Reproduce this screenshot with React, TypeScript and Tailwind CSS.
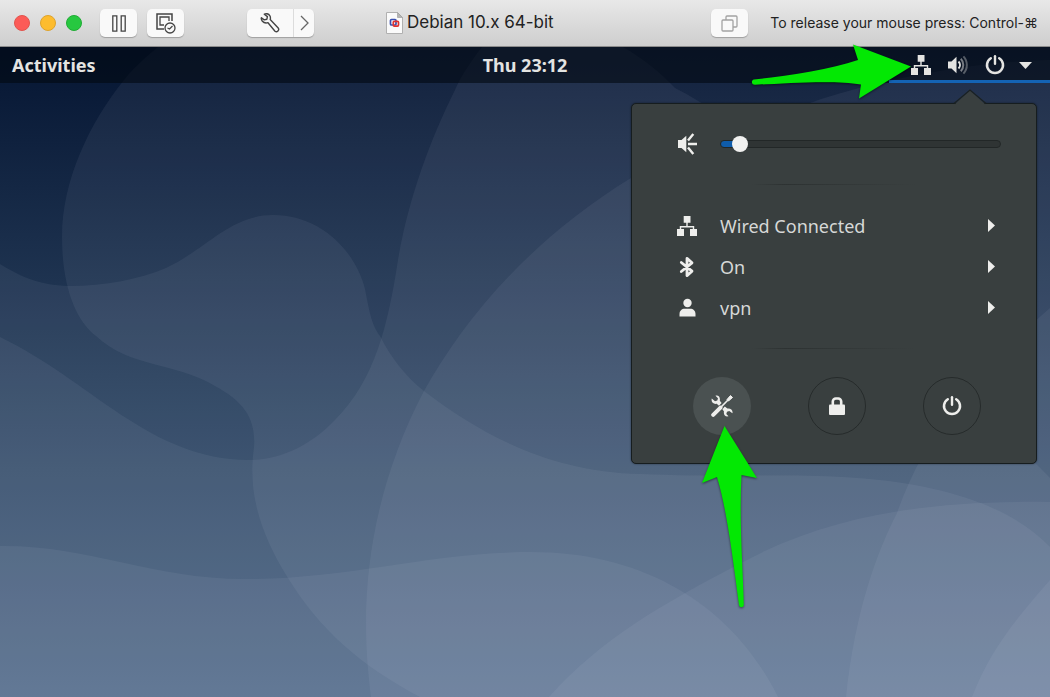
import { useState } from 'react'
import type { CSSProperties, ReactNode } from 'react'

interface MenuEntry {
  id: string
  label: string
  icon: ReactNode
}

function NetworkIcon() {
  return (
    <svg width="20" height="20" viewBox="0 0 20 20" fill="none" aria-hidden="true">
      <path d="M10 6v5M3.5 14v-3.2h13V14" stroke="currentColor" strokeWidth="1.4" />
      <path d="M6.7 0h6.8v6.8H6.7zM0 13h7v7H0zM13 13h7v7h-7z" fill="currentColor" />
    </svg>
  )
}

function VolumeIcon() {
  return (
    <svg width="22" height="20" viewBox="0 0 22 20" fill="none" aria-hidden="true">
      <path d="M1 6.5h3.5L9.5 1.8v16.4L4.5 13.5H1z" fill="currentColor" />
      <path d="M11.5 6.5a5 5 0 0 1 0 7" stroke="currentColor" strokeWidth="2" />
      <path d="M13.8 3.8a9 9 0 0 1 0 12.4" stroke="currentColor" strokeWidth="2" opacity=".5" />
      <path d="M16.4 1.4a12.5 12.5 0 0 1 0 17.2" stroke="currentColor" strokeWidth="2" opacity=".35" />
    </svg>
  )
}

function SpeakerIcon() {
  return (
    <svg width="20" height="22" viewBox="0 0 20 22" fill="none" aria-hidden="true">
      <path d="M1 7h3.5L9.3 2.8v16.4L4.5 15H1z" fill="currentColor" />
      <path d="M11 7.5 16.3 1M11 11h9M11 14.5l5.3 6.5" stroke="currentColor" strokeWidth="2.4" />
    </svg>
  )
}

function PowerIcon() {
  return (
    <svg width="20" height="20" viewBox="0 0 20 20" fill="none" aria-hidden="true">
      <path d="M5.8 3.2a8 8 0 1 0 8.4 0" stroke="currentColor" strokeWidth="2.5" strokeLinecap="round" />
      <path d="M10 1.2v7.6" stroke="currentColor" strokeWidth="2.4" strokeLinecap="round" />
    </svg>
  )
}

function BluetoothIcon() {
  return (
    <svg width="16" height="22" viewBox="0 0 16 22" fill="none" aria-hidden="true">
      <path d="M2.3 6.5 13 15.2 8 19.6V2.4l5 4.4L2.3 15.5" stroke="currentColor" strokeWidth="2.8" strokeLinejoin="round" strokeLinecap="round" />
    </svg>
  )
}

function UserIcon() {
  return (
    <svg width="18" height="20" viewBox="0 0 18 20" fill="currentColor" aria-hidden="true">
      <circle cx="9.5" cy="5" r="4.2" />
      <path d="M1.500 18.500V16c0-3.300 2.300-5.300 5.200-5.300h5.600c2.900 0 5.200 2 5.200 5.300v2.500z" />
    </svg>
  )
}

function ToolsIcon() {
  return (
    <svg width="22" height="22" viewBox="0 0 22 22" fill="none" aria-hidden="true">
      <path d="M2.2 19.8 9.5 12.6" stroke="currentColor" strokeWidth="4" strokeLinecap="round" />
      <path d="M9.5 12.6 18 4" stroke="currentColor" strokeWidth="1.500" />
      <path d="m16 4.500 3.500-4 2 2-4 3.500z" fill="currentColor" stroke="currentColor" strokeWidth="1" strokeLinejoin="round" />
      <path d="M4.500.8 7 3.300 6.300 5.500 4 6.200.8 3.600C-.2 6.600 2 9.400 5.700 8.800l2.300 2 2.600-2.700-1.800-2.400C9.500 2.300 7.400-.1 4.500.8z" fill="currentColor" />
      <path d="m13.800 11.600-2.400 2.600 1.600 2.200c-.8 3.300 1.500 5.700 4.500 4.900L15.300 19l.7-2.300 2.300-.7 3.100 2.300c.8-3-1.600-5.300-5-4.800z" fill="currentColor" />
    </svg>
  )
}

function LockIcon() {
  return (
    <svg width="18" height="20" viewBox="0 0 18 20" fill="none" aria-hidden="true">
      <path d="M4.800 9V5.500a3 3 0 0 1 3-3h2.400a3 3 0 0 1 3 3V9" stroke="currentColor" strokeWidth="2.600" />
      <rect x="1" y="8.500" width="16" height="10.500" rx="1" fill="currentColor" />
    </svg>
  )
}

function PauseIcon() {
  return (
    <svg width="14" height="17" viewBox="0 0 14 17" fill="none" aria-hidden="true">
      <path d="M.8.800h4v15.400h-4zM9.200.800h4v15.400h-4z" stroke="#444" strokeWidth="1.300" />
    </svg>
  )
}

function SnapshotIcon() {
  return (
    <svg width="20" height="21" viewBox="0 0 20 21" fill="none" stroke="#444" aria-hidden="true">
      <path d="M8 16H1V1h15v7" strokeWidth="1.500" />
      <path d="M8 12H4V4h9v4" strokeWidth="1.300" />
      <circle cx="14" cy="15" r="5" fill="#f8f8f8" strokeWidth="1.300" />
      <path d="m11.500 15 2 1 3-3" strokeWidth="1.200" />
    </svg>
  )
}

function WrenchIcon() {
  return (
    <svg width="20" height="20" viewBox="0 0 20 20" fill="none" aria-hidden="true">
      <path
        d="M4.300 1.200C6.500.3 9 1 10 3c.6 1.300.5 2.500.2 3.600l8 8.400c1.600 2-1.200 4.800-3.200 3.200L8 9.700c-2 .6-4.200.2-5.600-1.400-1-1.200-1.300-2.600-1-3.600l2.800 2.200 2.700-.7.500-2.600z"
        stroke="#444"
        strokeWidth="1.400"
        strokeLinejoin="round"
      />
    </svg>
  )
}

function WindowsIcon() {
  return (
    <svg width="17" height="17" viewBox="0 0 17 17" fill="none" stroke="#a3a3a3" strokeWidth="1.300" aria-hidden="true">
      <rect x="1" y="5" width="11" height="11" rx="1" />
      <path d="M5 5V2a1 1 0 0 1 1-1h9a1 1 0 0 1 1 1v9a1 1 0 0 1-1 1h-3" />
    </svg>
  )
}

function DocumentIcon() {
  return (
    <svg width="17" height="22" viewBox="0 0 17 22" fill="none" aria-hidden="true">
      <path d="M.5.500h11l5 5v16H.5z" fill="#fafafa" stroke="#b0b0b0" />
      <path d="M11.500.500v5h5z" fill="#b4b4b4" stroke="#999" strokeWidth=".6" />
      <rect x="4.500" y="7.500" width="5.500" height="5.500" rx="1" stroke="#3a4fb0" strokeWidth="1.700" />
      <rect x="7.300" y="9.300" width="5.200" height="4.800" rx="1" stroke="#e0322f" strokeWidth="1.700" />
    </svg>
  )
}

// Soft translucent waves over a vertical gradient
function Wallpaper() {
  return (
    <svg
      className="absolute inset-0 h-full w-full"
      viewBox="0 47 1050 650"
      preserveAspectRatio="none"
      aria-hidden="true"
    >
      <defs>
        <linearGradient id="sky" x1="0" y1="0" x2="0" y2="1">
          <stop offset="0" stopColor="#051532" />
          <stop offset=".65" stopColor="#324b68" />
          <stop offset="1" stopColor="#496382" />
        </linearGradient>
      </defs>
      <rect x="0" y="47" width="1050" height="650" fill="url(#sky)" />
      <g fill="#f0f2ff" fillOpacity=".057">
        <path d="M158 47C140 62 132 70 124 80C90 122 62 180 62 237C62 285 75 320 96 336C130 368 175 362 215 386C245 402 256 420 254 447C248 490 258 530 288 578C320 630 360 665 420 697H1050V47Z" />
        <path d="M482 47C468 65 459 80 455 90C430 140 408 200 398 260C388 325 375 380 335 420C310 446 280 460 249 460C150 460 90 380 0 337V697H1050V478C900 330 800 150 675 88C660 72 645 60 623 47Z" />
        <path d="M0 264C22 277 38 285 69 286C105 286 140 279 166 268C205 250 230 215 273 215C320 215 355 250 365 289C370 315 372 325 380 336C390 356 405 376 424 391C480 434 550 472 640 474C740 478 790 473 857 478C940 484 1010 505 1050 547V697H0Z" />
        <path d="M1050 60C960 62 860 85 813 102C740 125 680 148 631 178C530 240 465 318 424 391C385 465 366 545 366 623C366 655 369 680 371 697H1050Z" />
        <path d="M0 546C90 545 150 579 245 579C350 579 430 552 531 552C650 552 735 610 778 697H0Z" />
        <path d="M549 697C600 640 660 605 743 562C830 515 930 500 1050 502V697Z" />
        <path d="M846 697C855 610 878 550 897 513C930 420 990 360 1050 308V697Z" />
        <path d="M972 697C990 650 1015 620 1050 580V697Z" />
      </g>
    </svg>
  )
}

function TitleBar() {
  return (
    <header className="flex h-[47px] shrink-0 items-center border-b border-[#8b8b8b] bg-linear-to-b from-[#e8e8e8] to-[#cecece] pr-3 pl-[14px] font-['Inter',sans-serif] text-[#222]">
      <div className="flex gap-[10px]">
        <button aria-label="Close" className="size-4 rounded-full border border-[#e2544d] bg-[#fc5b57]" />
        <button aria-label="Minimize" className="size-4 rounded-full border border-[#dea32c] bg-[#fdbc2e]" />
        <button aria-label="Zoom" className="size-4 rounded-full border border-[#20ac35] bg-[#27c840]" />
      </div>
      <div className="ml-[18px] flex gap-[10px]">
        <ToolButton label="Pause">
          <PauseIcon />
        </ToolButton>
        <ToolButton label="Snapshots">
          <SnapshotIcon />
        </ToolButton>
      </div>
      <div className="ml-[63px] flex h-7 divide-x divide-[#dcdcdc] rounded-[5px] bg-[#f9f9f9] shadow-[0_1px_1px_rgba(0,0,0,0.25)]">
        <button aria-label="Settings" className="flex w-[47px] items-center justify-center">
          <WrenchIcon />
        </button>
        <button aria-label="More" className="flex w-5 items-center justify-center">
          <svg width="9" height="16" viewBox="0 0 9 16" fill="none" aria-hidden="true">
            <path d="m1 1 7 7-7 7" stroke="#666" strokeWidth="1.300" />
          </svg>
        </button>
      </div>
      <h1 className="ml-[72px] flex items-center gap-1 text-[17px] whitespace-nowrap">
        <DocumentIcon />
        Debian 10.x 64-bit
      </h1>
      <div className="ml-auto flex items-center gap-[22px]">
        <ToolButton label="Show windows">
          <WindowsIcon />
        </ToolButton>
        <p className="text-sm whitespace-nowrap">To release your mouse press: Control-⌘</p>
      </div>
    </header>
  )
}

function ToolButton({ label, children }: { label: string; children: ReactNode }) {
  return (
    <button
      aria-label={label}
      className="flex h-7 w-[37px] items-center justify-center rounded-[5px] bg-[#f9f9f9] shadow-[0_1px_1px_rgba(0,0,0,0.25)]"
    >
      {children}
    </button>
  )
}

function TopBar() {
  return (
    <nav className="relative grid h-9 shrink-0 grid-cols-3 bg-[#020811]/60 text-lg font-bold text-[#e4e4e2]">
      <button className="justify-self-start px-3">Activities</button>
      <button className="justify-self-center">Thu 23:12</button>
      <button
        aria-label="System menu"
        className="flex items-center justify-self-end border-b-3 border-[#1463b4] pt-[3px] pr-[18px] pl-[22px]"
      >
        <NetworkIcon />
        <span className="ml-4">
          <VolumeIcon />
        </span>
        <span className="ml-4">
          <PowerIcon />
        </span>
        <svg className="ml-[14px]" width="13" height="7" viewBox="0 0 13 7" fill="currentColor" aria-hidden="true">
          <path d="M0 0h13L6.500 7z" />
        </svg>
      </button>
    </nav>
  )
}

function Separator() {
  return (
    <hr className="mx-auto my-5 h-px w-[164px] border-0 bg-linear-to-r from-transparent via-[#2d3232] via-20% to-transparent" />
  )
}

const entries: MenuEntry[] = [
  { id: 'wired', label: 'Wired Connected', icon: <NetworkIcon /> },
  { id: 'bluetooth', label: 'On', icon: <BluetoothIcon /> },
  { id: 'user', label: 'vpn', icon: <UserIcon /> },
]

function SystemMenu() {
  const [volume, setVolume] = useState(4)
  const fill = { '--fill': `${volume + 2}%` } as CSSProperties

  return (
    <section className="absolute top-5 right-[13px] w-[406px] rounded-[5px] border border-[#161d1f] bg-[#393f3f] pt-5 pb-7 text-[#eeeeec] shadow-[0_0_2px_rgba(0,0,0,0.5)]">
      <svg className="absolute -top-[15px] right-[49px]" width="34" height="16" viewBox="0 0 34 16" aria-hidden="true">
        <path d="M1 16 17 1.500 33 16z" fill="#393f3f" />
        <path d="M1 14.500 17 1 33 14.500" fill="none" stroke="#1a2122" strokeWidth="1.200" />
      </svg>
      <label className="flex h-10 items-center gap-[22px] pr-[35px] pl-11">
        <span className="flex w-[22px] justify-center">
          <SpeakerIcon />
        </span>
        <input
          type="range"
          aria-label="Volume"
          min={0}
          max={100}
          value={volume}
          onChange={e => setVolume(Number(e.target.value))}
          style={fill}
          className="h-4 min-w-0 flex-1 appearance-none bg-transparent [&::-webkit-slider-runnable-track]:h-2 [&::-webkit-slider-runnable-track]:rounded-full [&::-webkit-slider-runnable-track]:border [&::-webkit-slider-runnable-track]:border-[#222727] [&::-webkit-slider-runnable-track]:bg-[linear-gradient(to_right,#0f5caa_var(--fill),#2f3434_var(--fill))] [&::-webkit-slider-thumb]:-mt-[5px] [&::-webkit-slider-thumb]:size-4 [&::-webkit-slider-thumb]:appearance-none [&::-webkit-slider-thumb]:rounded-full [&::-webkit-slider-thumb]:bg-[#f1f1f0]"
        />
      </label>
      <Separator />
      <ul>
        {entries.map(entry => (
          <li key={entry.id}>
            <button className="flex h-[41px] w-full items-center gap-[22px] pr-[41px] pl-11 text-left text-lg text-[#d6d8d7]">
              <span className="flex w-[22px] justify-center text-[#eeeeec]">{entry.icon}</span>
              <span className="flex-1">{entry.label}</span>
              <svg width="7" height="13" viewBox="0 0 7 13" fill="#eeeeec" aria-hidden="true">
                <path d="M0 0v13l7-6.500z" />
              </svg>
            </button>
          </li>
        ))}
      </ul>
      <Separator />
      <div className="mt-7 flex justify-center gap-[57px] pl-[5px]">
        <button aria-label="Settings" className="flex size-[58px] items-center justify-center rounded-full bg-[#4a5151]">
          <ToolsIcon />
        </button>
        <button aria-label="Lock" className="flex size-[58px] items-center justify-center rounded-full border border-[#262b2b]">
          <LockIcon />
        </button>
        <button aria-label="Power off" className="flex size-[58px] items-center justify-center rounded-full border border-[#262b2b]">
          <PowerIcon />
        </button>
      </div>
    </section>
  )
}

// Green pointers laid over the desktop
function Pointers() {
  return (
    <>
      <svg
        className="pointer-events-none absolute top-[42px] right-[138px] drop-shadow-[0_1px_1px_rgba(0,0,0,0.5)]"
        width="162"
        height="60"
        viewBox="750 42 162 60"
        aria-hidden="true"
      >
        <path
          d="M754 79.500C790 76 830 69 858 60L853 44.500 911 66.500 859 98.500 861 84.500C835 80 790 83 755 84.800C751 84.800 751 80 754 79.500Z"
          fill="#03e803"
        />
      </svg>
      <svg
        className="pointer-events-none absolute top-[424px] right-[290px] drop-shadow-[0_1px_1px_rgba(0,0,0,0.5)]"
        width="60"
        height="186"
        viewBox="700 424 60 186"
        aria-hidden="true"
      >
        <path
          d="M724.500 426 757 478 741.500 475C739 520 743 570 743.800 605C743.500 608 739.500 608 739 605C733 560 727 510 717 477L702 483Z"
          fill="#03e803"
        />
      </svg>
    </>
  )
}

export default function App() {
  return (
    <div className="relative flex min-h-screen flex-col overflow-hidden font-['Noto_Sans',sans-serif]">
      <TitleBar />
      <main className="relative flex flex-1 flex-col">
        <Wallpaper />
        <TopBar />
        <div className="relative min-h-[400px] flex-1">
          <SystemMenu />
        </div>
      </main>
      <Pointers />
    </div>
  )
}
